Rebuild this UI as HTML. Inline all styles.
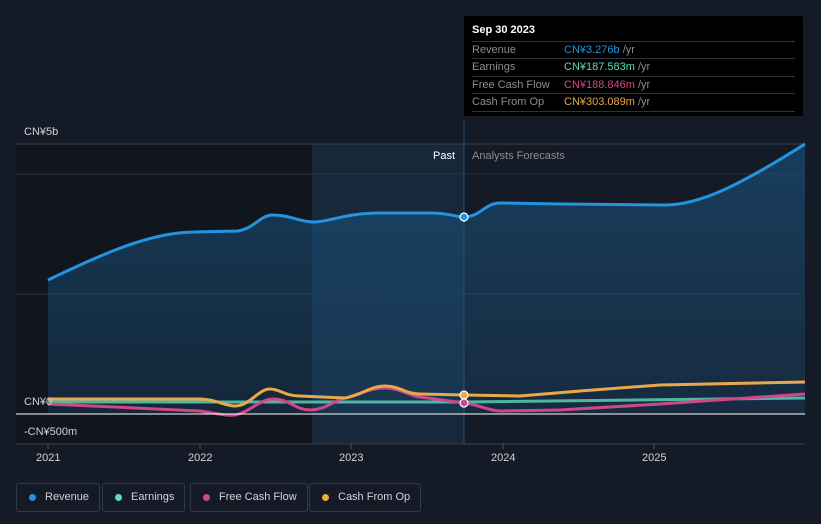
<!DOCTYPE html>
<html><head><meta charset="utf-8"><style>
body{margin:0;width:821px;height:524px;background:#151b26;font-family:"Liberation Sans",sans-serif;overflow:hidden;position:relative}
.t{position:absolute;font-size:11px;color:#d0d3d8}
.tip{position:absolute;left:464px;top:16px;width:339px;height:100px;background:#000;border-radius:2px}
.tip .h{position:absolute;left:8px;top:8px;color:#fff;font-size:11px;font-weight:bold}
.row{position:absolute;left:8px;width:323px;height:17px;border-top:1px solid #333;font-size:11px;color:#8a8d92;line-height:17px}
.row b{position:absolute;left:92px;font-weight:normal}
.row i{font-style:normal;color:#8a8d92}
.leg{position:absolute;top:483px;height:27px;border:1px solid #333a46;border-radius:3px;font-size:11px;color:#d0d3d8;line-height:27px;padding:0 10px 0 28px}
.leg:before{content:"";position:absolute;left:12px;top:10px;width:7px;height:7px;border-radius:50%;background:var(--c)}
</style></head><body>
<svg width="821" height="524" style="position:absolute;left:0;top:0">
<defs><linearGradient id="g" x1="0" y1="0" x2="0" y2="1"><stop offset="0" stop-color="#1b5a8a" stop-opacity=".55"/><stop offset="1" stop-color="#1b5a8a" stop-opacity=".25"/></linearGradient></defs>
<rect x="16" y="144" width="296" height="300" fill="#11161e"/>
<rect x="312" y="144" width="152" height="300" fill="#16283a"/>
<line x1="16" y1="144" x2="805" y2="144" stroke="#3a404a"/>
<line x1="16" y1="174" x2="805" y2="174" stroke="#2c323c"/>
<line x1="16" y1="294" x2="805" y2="294" stroke="#2c323c"/>
<line x1="16" y1="444" x2="805" y2="444" stroke="#3a404a"/>
<path d="M48,280 C100,255 150,232 195,232 L238,231 C255,228 260,215 273,215 C290,215 300,222 313,222 C330,222 345,213 380,213 L430,213 C450,213 455,217 464,217 C480,217 485,203 500,203 L560,204 L665,205 C700,205 740,185 805,144 L805,414 L48,414Z" fill="url(#g)"/>
<path d="M48,280 C100,255 150,232 195,232 L238,231 C255,228 260,215 273,215 C290,215 300,222 313,222 C330,222 345,213 380,213 L430,213 C450,213 455,217 464,217 C480,217 485,203 500,203 L560,204 L665,205 C700,205 740,185 805,144" fill="none" stroke="#2394e0" stroke-width="3"/>
<line x1="464" y1="120" x2="464" y2="444" stroke="#24507a"/>
<path d="M48,402 L464,402 L805,398" fill="none" stroke="#5ed9c0" stroke-width="3" opacity=".8"/>
<path d="M48,404 L200,411 C215,413 225,416 235,415 C250,412 260,399 273,399 C290,399 295,410 310,410 C325,410 335,400 345,398 C360,394 370,388 385,388 C400,388 410,396 420,397 L464,403 C480,405 490,411 500,411 L560,410 L660,404 L805,394" fill="none" stroke="#d0468a" stroke-width="3"/>
<path d="M48,399 L200,399 C215,399 225,406 235,406 C250,406 258,389 270,389 C280,389 285,396 300,396 L345,398 C360,396 370,386 385,386 C400,386 405,394 420,394 L464,395 L520,396 L580,391 L660,385 L805,382" fill="none" stroke="#e9a94a" stroke-width="3"/>
<line x1="16" y1="414" x2="805" y2="414" stroke="#fff" stroke-width="1"/>
<circle cx="464" cy="217" r="4" fill="#2394e0" stroke="#fff" stroke-width="1.2"/>
<circle cx="464" cy="395" r="4" fill="#e9a94a" stroke="#fff" stroke-width="1.2"/>
<circle cx="464" cy="403" r="4" fill="#d0468a" stroke="#fff" stroke-width="1.2"/>
<g stroke="#555"><line x1="48" y1="444" x2="48" y2="449"/><line x1="200" y1="444" x2="200" y2="449"/><line x1="351" y1="444" x2="351" y2="449"/><line x1="503" y1="444" x2="503" y2="449"/><line x1="654" y1="444" x2="654" y2="449"/></g>
</svg>
<div class="t" style="left:24px;top:126px">CN¥5b</div>
<div class="t" style="left:24px;top:396px">CN¥0</div>
<div class="t" style="left:24px;top:426px">-CN¥500m</div>
<div class="t" style="left:433px;top:150px;color:#fff">Past</div>
<div class="t" style="left:472px;top:150px;color:#8a8d92">Analysts Forecasts</div>
<div class="t" style="left:36px;top:452px">2021</div>
<div class="t" style="left:188px;top:452px">2022</div>
<div class="t" style="left:339px;top:452px">2023</div>
<div class="t" style="left:491px;top:452px">2024</div>
<div class="t" style="left:642px;top:452px">2025</div>
<div class="tip"><div class="h">Sep 30 2023</div>
<div class="row" style="top:25px">Revenue<b><span style="color:#2394e0">CN¥3.276b</span> <i>/yr</i></b></div>
<div class="row" style="top:42px">Earnings<b><span style="color:#5ed9c0">CN¥187.583m</span> <i>/yr</i></b></div>
<div class="row" style="top:60px">Free Cash Flow<b><span style="color:#d0468a">CN¥188.846m</span> <i>/yr</i></b></div>
<div class="row" style="top:77px;border-bottom:1px solid #333">Cash From Op<b><span style="color:#e9a94a">CN¥303.089m</span> <i>/yr</i></b></div>
</div>
<div class="leg" style="left:16px;--c:#2394e0">Revenue</div>
<div class="leg" style="left:102px;--c:#5ed9c0">Earnings</div>
<div class="leg" style="left:190px;--c:#d0468a">Free Cash Flow</div>
<div class="leg" style="left:309px;--c:#e9a94a">Cash From Op</div>
</body></html>
